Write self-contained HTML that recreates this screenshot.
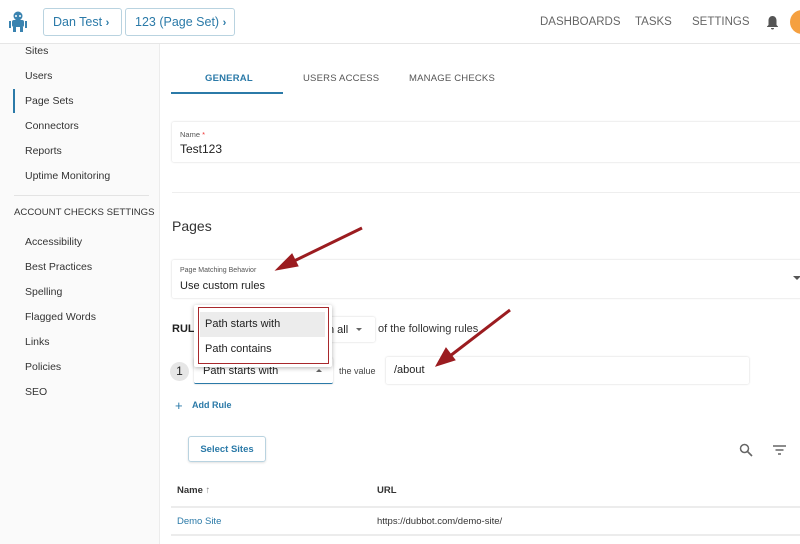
<!DOCTYPE html>
<html><head><style>
*{box-sizing:border-box;margin:0;padding:0}
body{width:800px;height:544px;overflow:hidden;font-family:"Liberation Sans",sans-serif;background:#fff;position:relative;color:#222}
.a{position:absolute;white-space:nowrap}
.top{position:absolute;left:0;top:0;width:800px;height:44px;background:#fff;border-bottom:1px solid #e6e6e6;z-index:2}
.crumb{position:absolute;top:8px;height:28px;border:1px solid #b9d3e0;border-radius:3px;color:#2b7aa8;font-size:12.5px;line-height:26px;padding-left:9px}
.nav{color:#666;font-size:11.5px;top:16px}
.side{position:absolute;left:0;top:44px;width:160px;height:500px;background:#fafafa;border-right:1px solid #ececec}
.si{font-size:10.5px;color:#333;left:25px}
.tab{font-size:9.5px;top:73px;letter-spacing:.2px;color:#555}
.card{position:absolute;background:#fff;box-shadow:0 0 2px rgba(0,0,0,.18);border-radius:2px}
</style></head><body>
<div class="top">
<svg class="a" style="left:8px;top:11px" width="20" height="22" viewBox="0 0 20 22"><g fill="#3a83b0"><circle cx="10" cy="5" r="4.5"/><rect x="4" y="9" width="12" height="7" rx="2"/><rect x="1" y="10" width="2" height="7"/><rect x="17" y="10" width="2" height="7"/><rect x="5" y="16" width="3" height="5"/><rect x="12" y="16" width="3" height="5"/></g><circle cx="8" cy="5" r="1" fill="#fff"/><circle cx="12" cy="5" r="1" fill="#fff"/></svg>
<div class="crumb" style="left:43px;width:79px">Dan Test <b style="font-size:11px">&#8250;</b></div>
<div class="crumb" style="left:125px;width:110px">123 (Page Set) <b style="font-size:11px">&#8250;</b></div>
<div class="a nav" style="left:540px">DASHBOARDS</div>
<div class="a nav" style="left:635px">TASKS</div>
<div class="a nav" style="left:692px">SETTINGS</div>
<svg class="a" style="left:766px;top:15px" width="13" height="15" viewBox="0 0 13 15"><path d="M6.5 1C4 1 2.5 3 2.5 5.5V10L1 11.5V12h11v-.5L10.5 10V5.5C10.5 3 9 1 6.5 1z M5 13h3a1.5 1.5 0 0 1-3 0z" fill="#555"/></svg>
<div class="a" style="left:790px;top:10px;width:24px;height:24px;border-radius:50%;background:#f5a040"></div>
</div>
<div class="side">
<div class="a si" style="top:1px">Sites</div>
<div class="a si" style="top:26px">Users</div>
<div class="a" style="left:13px;top:45px;width:2px;height:24px;background:#2b7aa8"></div>
<div class="a si" style="top:51px">Page Sets</div>
<div class="a si" style="top:76px">Connectors</div>
<div class="a si" style="top:101px">Reports</div>
<div class="a si" style="top:126px">Uptime Monitoring</div>
<div class="a" style="left:14px;top:151px;width:135px;height:1px;background:#e3e3e3"></div>
<div class="a" style="left:14px;top:163px;font-size:9.6px;color:#333">ACCOUNT CHECKS SETTINGS</div>
<div class="a si" style="top:192px">Accessibility</div>
<div class="a si" style="top:217px">Best Practices</div>
<div class="a si" style="top:242px">Spelling</div>
<div class="a si" style="top:267px">Flagged Words</div>
<div class="a si" style="top:292px">Links</div>
<div class="a si" style="top:317px">Policies</div>
<div class="a si" style="top:342px">SEO</div>
</div>
<div class="a tab" style="left:205px;color:#2b7aa8;font-weight:bold">GENERAL</div>
<div class="a tab" style="left:303px">USERS ACCESS</div>
<div class="a tab" style="left:409px">MANAGE CHECKS</div>
<div class="a" style="left:171px;top:92px;width:112px;height:2px;background:#2b7aa8"></div>
<div class="card" style="left:172px;top:122px;width:640px;height:40px"></div>
<div class="a" style="left:180px;top:130px;font-size:7.5px;color:#555">Name <span style="color:#e33">*</span></div>
<div class="a" style="left:180px;top:142px;font-size:12px">Test123</div>
<div class="a" style="left:172px;top:192px;width:628px;height:1px;background:#eee"></div>
<div class="a" style="left:172px;top:218px;font-size:14px;color:#333">Pages</div>
<div class="card" style="left:172px;top:260px;width:640px;height:38px"></div>
<div class="a" style="left:180px;top:267px;font-size:7px;color:#555">Page Matching Behavior</div>
<div class="a" style="left:180px;top:280px;font-size:11px">Use custom rules</div>
<div class="a" style="left:793px;top:276px;border:4px solid transparent;border-top-color:#555"></div>
<div class="a" style="left:172px;top:323px;font-size:11px;font-weight:bold">RULI</div>
<div class="card" style="left:300px;top:317px;width:75px;height:25px"></div>
<div class="a" style="left:328px;top:324px;font-size:11px">n all</div>
<div class="a" style="left:356px;top:328px;border:3.5px solid transparent;border-top-color:#666"></div>
<div class="a" style="left:378px;top:323px;font-size:11px;color:#333">of the following rules</div>
<div class="a" style="left:170px;top:362px;width:19px;height:19px;border-radius:50%;background:#e6e6e6;font-size:12px;text-align:center;line-height:19px">1</div>
<div class="card" style="left:194px;top:358px;width:139px;height:26px;border-bottom:1px solid #2b7aa8"></div>
<div class="a" style="left:203px;top:365px;font-size:11px">Path starts with</div>
<div class="a" style="left:316px;top:366px;border:3.5px solid transparent;border-bottom-color:#666"></div>
<div class="a" style="left:339px;top:366px;font-size:9px;color:#444">the value</div>
<div class="card" style="left:386px;top:357px;width:363px;height:27px"></div>
<div class="a" style="left:394px;top:364px;font-size:11px">/about</div>
<div class="card" style="left:194px;top:305px;width:138px;height:62px;box-shadow:0 1px 5px rgba(0,0,0,.3)"></div>
<div class="a" style="left:198px;top:307px;width:131px;height:57px;border:1.5px solid #a8282c"></div>
<div class="a" style="left:200px;top:312px;width:125px;height:25px;background:#ececec"></div>
<div class="a" style="left:205px;top:318px;font-size:11px">Path starts with</div>
<div class="a" style="left:205px;top:343px;font-size:11px">Path contains</div>
<div class="a" style="left:175px;top:398px;font-size:13px;color:#2b7aa8">+</div>
<div class="a" style="left:192px;top:400px;font-size:9px;color:#2b7aa8;font-weight:bold">Add Rule</div>
<div class="a" style="left:188px;top:436px;width:78px;height:26px;border:1px solid #b9d3e0;border-radius:3px;box-shadow:0 1px 2px rgba(0,0,0,.12);font-size:9.5px;color:#2b7aa8;font-weight:bold;text-align:center;line-height:26px">Select Sites</div>
<svg class="a" style="left:739px;top:443px" width="14" height="14" viewBox="0 0 14 14"><circle cx="5.5" cy="5.5" r="4" fill="none" stroke="#666" stroke-width="1.5"/><path d="M8.5 8.5L13 13" stroke="#666" stroke-width="1.6"/></svg>
<svg class="a" style="left:773px;top:445px" width="13" height="10" viewBox="0 0 13 10"><path d="M0 1h13M2.5 5h8M5 9h3" stroke="#666" stroke-width="1.4"/></svg>
<div class="a" style="left:177px;top:485px;font-size:9.5px;font-weight:bold;color:#333">Name <span style="font-weight:normal;color:#888">&#8593;</span></div>
<div class="a" style="left:377px;top:485px;font-size:9.5px;font-weight:bold;color:#333">URL</div>
<div class="a" style="left:171px;top:506px;width:629px;height:2px;background:#ececec"></div>
<div class="a" style="left:177px;top:516px;font-size:9.5px;color:#2b7aa8">Demo Site</div>
<div class="a" style="left:377px;top:516px;font-size:9.5px;color:#333">https://dubbot.com/demo-site/</div>
<div class="a" style="left:171px;top:534px;width:629px;height:2px;background:#ececec"></div>
<svg class="a" style="left:0;top:0" width="800" height="544"><g fill="#9b1c20" stroke="#9b1c20"><path d="M362 228L292 262" stroke-width="3"/><path d="M276 270L292 254L298 266z"/><path d="M510 310L450 356" stroke-width="3"/><path d="M436 366L446 348L455 360z"/></g></svg>
</body></html>
